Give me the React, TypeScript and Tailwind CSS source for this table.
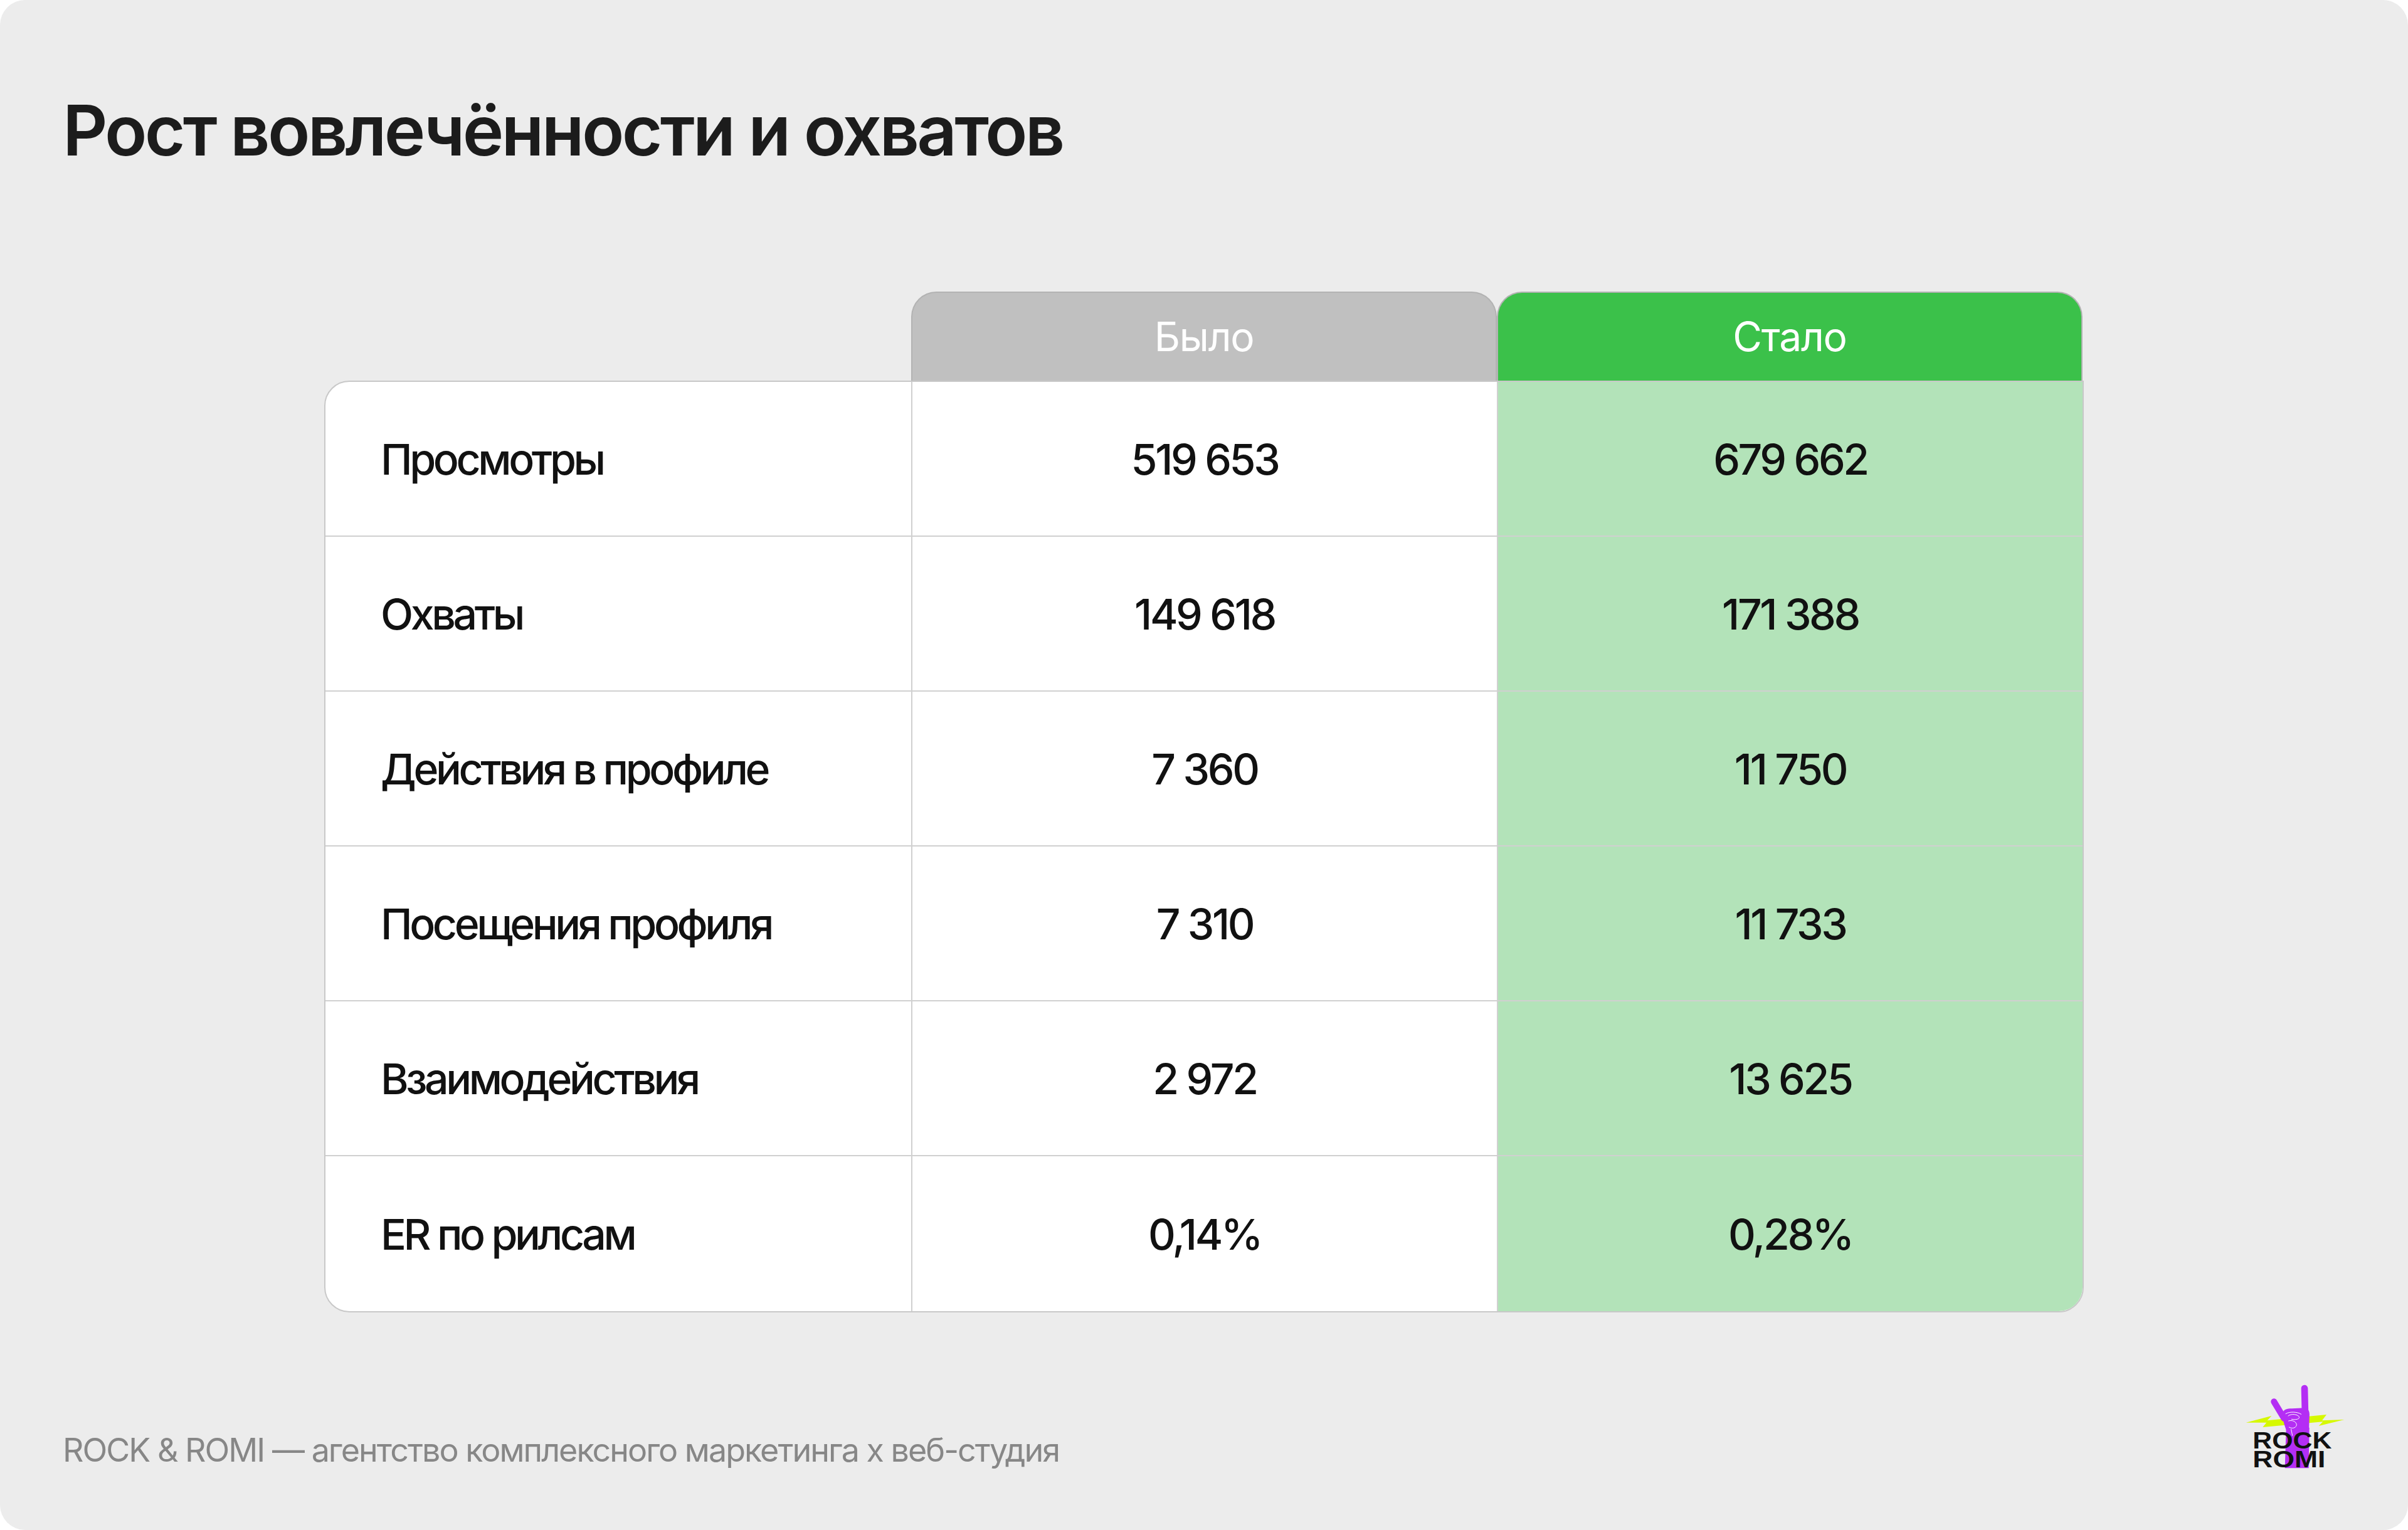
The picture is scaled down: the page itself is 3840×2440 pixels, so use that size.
const ROWS = [
  { label: "Просмотры", before: "519 653", after: "679 662" },
  { label: "Охваты", before: "149 618", after: "171 388" },
  { label: "Действия в профиле", before: "7 360", after: "11 750" },
  { label: "Посещения профиля", before: "7 310", after: "11 733" },
  { label: "Взаимодействия", before: "2 972", after: "13 625" },
  { label: "ER по рилсам", before: "0,14%", after: "0,28%" },
]

function Logo() {
  return (
    <svg width="170" height="150" viewBox="0 0 510 450" className="block">
      {/* lightning bolt */}
      <polygon
        points="20,200 142,168 122,190 405,162 384,190 490,186 368,216 388,196 100,222 118,200"
        fill="#d6f900"
      />
      {/* hand */}
      <g fill="#b42ef4" stroke="#b42ef4">
        <line x1="154" y1="100" x2="202" y2="180" strokeWidth="30" strokeLinecap="round" />
        <line x1="300" y1="36" x2="303" y2="165" strokeWidth="32" strokeLinecap="round" />
        <path
          strokeWidth="0"
          d="M195,162 C193,140 214,130 240,133 L300,130 C322,132 326,152 323,178 L321,236 L214,240 C204,214 196,190 195,162 Z"
        />
        <polygon strokeWidth="0" points="212,228 323,224 320,418 206,418" />
      </g>
      <g fill="none" stroke="#ffffff" strokeWidth="3" strokeLinecap="round">
        <path d="M210,158 C228,146 266,148 284,160" />
        <path d="M222,168 C236,156 266,160 274,172 C278,184 258,188 238,184" />
        <path d="M224,192 C242,186 262,196 262,212 C258,228 238,230 226,222" />
        <path d="M236,232 L242,262" />
      </g>
      <g fill="#111111" fontFamily="'Liberation Sans', Arial, sans-serif" fontWeight="700">
        <text x="52" y="325" fontSize="112" textLength="378" lengthAdjust="spacingAndGlyphs">
          ROCK
        </text>
        <text x="52" y="415" fontSize="112" textLength="348" lengthAdjust="spacingAndGlyphs">
          ROMI
        </text>
      </g>
    </svg>
  )
}

export default function App() {
  return (
    <div className="w-[3840px] h-[2440px] bg-white" style={{ fontFamily: "Inter, 'Noto Sans', sans-serif" }}>
      <div className="w-full h-full rounded-[40px] bg-[#ececec] flex flex-col">
        {/* Title */}
        <h1 className="pl-[100px] pt-[152px] text-[111px] leading-none font-semibold tracking-[-0.034em] text-[#1c1c1c]">
          Рост вовлечённости и охватов
        </h1>

        {/* Table */}
        <div className="mx-auto mt-[202px] w-[2806px]">
          <div className="grid grid-cols-3 px-[2px] h-[142px]">
            <div />
            <div className="flex items-center justify-center rounded-t-[40px] border-2 border-b-0 border-[#b3b3b3] bg-[#c0c0c0] text-[64px] tracking-[-0.02em] text-white">
              Было
            </div>
            <div className="flex items-center justify-center rounded-t-[40px] border-2 border-b-0 border-[#b3b3b3] bg-[#3bc14a] text-[64px] tracking-[-0.02em] text-white">
              Стало
            </div>
          </div>

          <div className="rounded-[40px] rounded-tr-none border-2 border-[#c8c8c8] bg-white overflow-hidden">
            {ROWS.map((row, i) => (
              <div
                key={row.label}
                className={`grid grid-cols-3 h-[247px] ${i < ROWS.length - 1 ? "border-b-2 border-[#d0d0d0]" : ""}`}
              >
                <div className="flex items-center pl-[88px] text-[68px] font-medium tracking-[-0.065em] text-[#111]">
                  <span>{row.label}</span>
                </div>
                <div className="flex items-center justify-center border-l-2 border-[#d0d0d0] text-[68px] font-medium tracking-[-0.05em] text-[#111]">
                  <span>{row.before}</span>
                </div>
                <div className="flex items-center justify-center border-l-2 border-[#d0d0d0] bg-[#b3e3b9] text-[68px] font-medium tracking-[-0.05em] text-[#111]">
                  <span>{row.after}</span>
                </div>
              </div>
            ))}
          </div>
        </div>

        {/* Footer */}
        <div className="mt-[109px] flex items-end justify-between pl-[100px] pr-[95px]">
          <p className="mb-[13px] text-[52px] leading-none tracking-[-0.038em] text-[#878787]">
            ROCK &amp; ROMI — агентство комплексного маркетинга х веб-студия
          </p>
          <Logo />
        </div>
      </div>
    </div>
  )
}
